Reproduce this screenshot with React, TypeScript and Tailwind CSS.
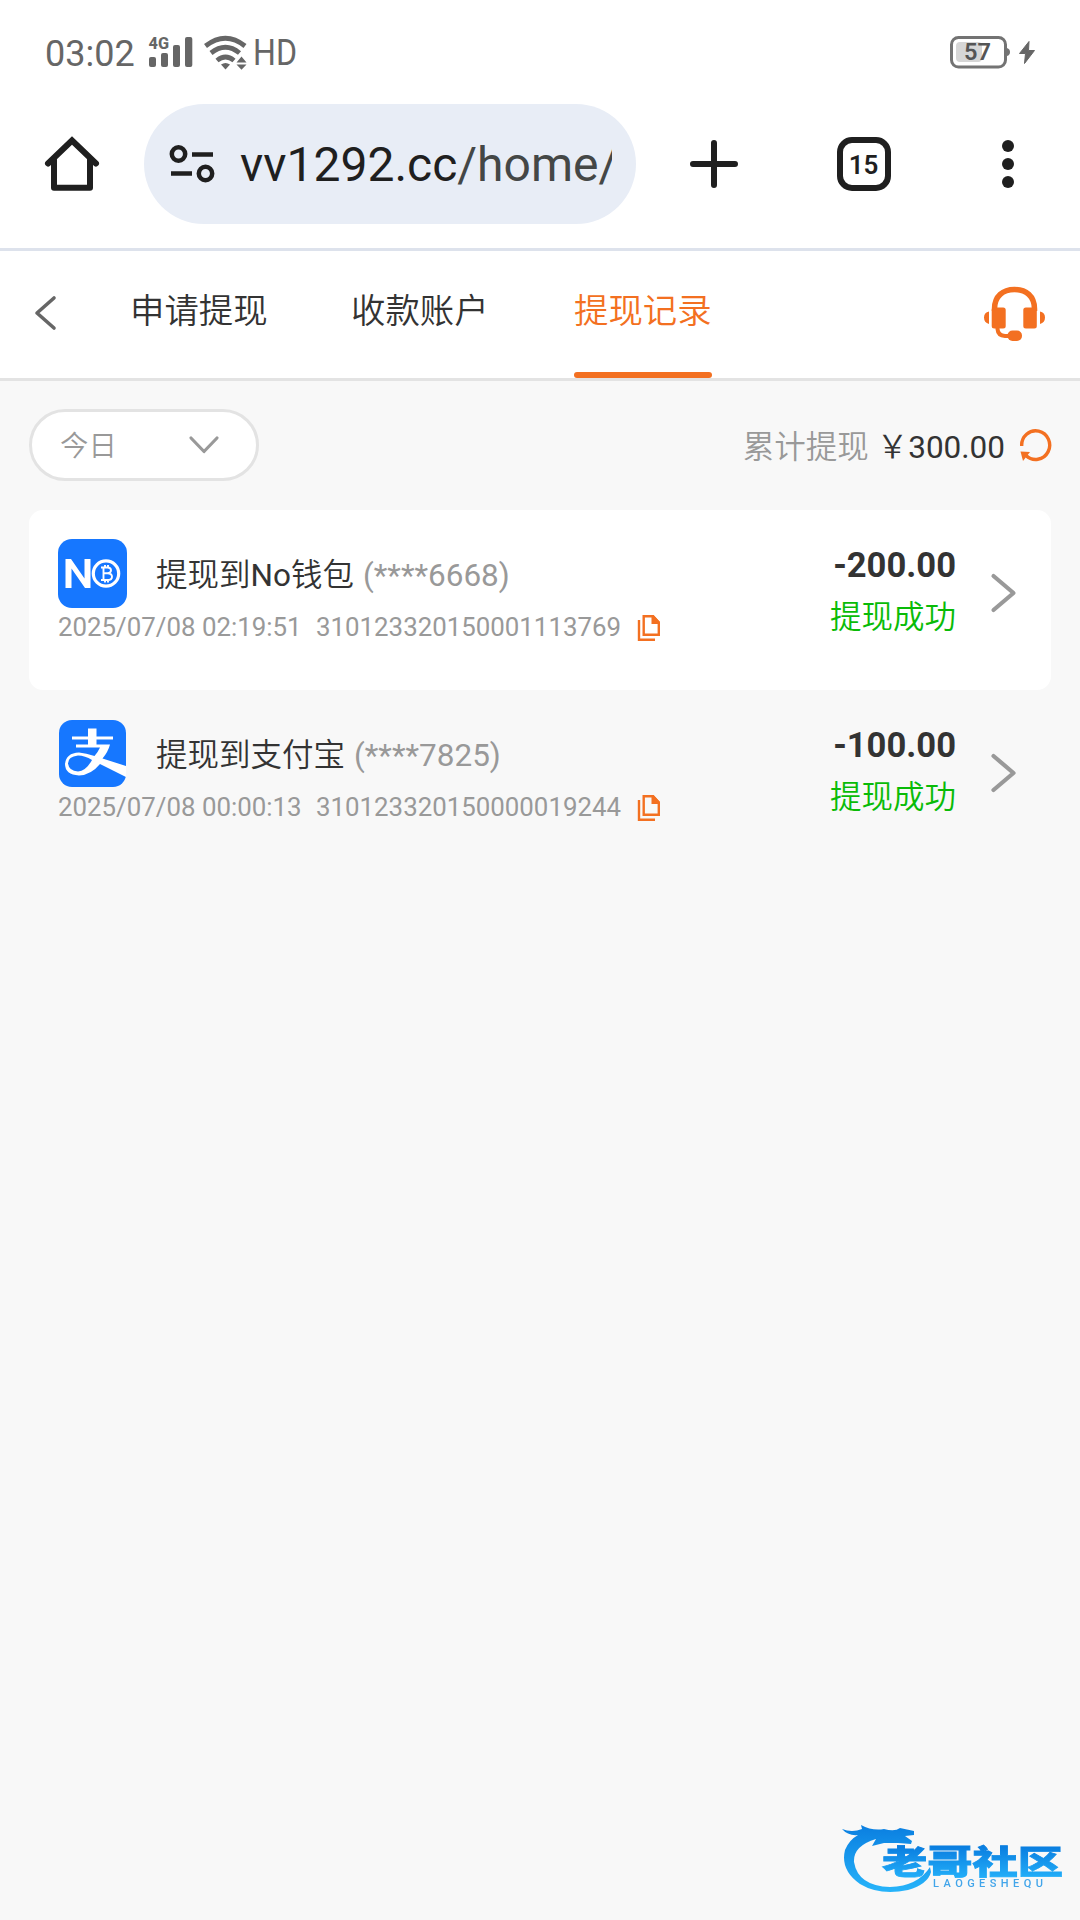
import React from "react";

const Chevron = ({ className, d, box, w }: { className: string; d: string; box: string; w: number }) => (
  <svg className={className} viewBox={box} fill="none" stroke="currentColor" strokeWidth={w} strokeLinecap="round" strokeLinejoin="round">
    <path d={d} />
  </svg>
);

function StatusBar() {
  return (
    <div className="flex h-[104px] shrink-0 items-start justify-between pt-[29px] pr-[44px] pl-[45px] text-[#666]">
      <div className="flex h-[46px] items-center">
        <span className="w-[103px] pt-[4px] text-[36px] leading-[46px] font-[450]">03:02</span>
        <svg className="h-[46px] w-[46px] overflow-visible" viewBox="148 29 46 46" fill="currentColor">
          <text x="148.500" y="49.300" fontSize="17" fontWeight="800" textLength="20.500" lengthAdjust="spacingAndGlyphs">4G</text>
          <rect x="149" y="57" width="7" height="10" rx="2" />
          <rect x="161" y="53" width="7" height="14" rx="2" />
          <rect x="173" y="45" width="7" height="22" rx="2" />
          <rect x="185" y="37" width="7.300" height="30" rx="2" />
        </svg>
        <svg className="ml-[9px] h-[46px] w-[46px]" viewBox="203 29 46 46" fill="none" stroke="currentColor" strokeWidth="4.800">
          <path d="M205.500 46Q225.500 30.500 245 46" />
          <path d="M211 53Q225.500 41.500 239.500 53" />
          <path d="M217 60.500Q225.500 53.500 234 60.500" />
          <path d="M221 64.500Q225.500 61.500 230 64.500L225.500 69.500Z" fill="currentColor" stroke="none" />
          <path d="M236.500 62.500L241.500 56.500L246.500 62.500ZM236.500 64.500H246.500L241.500 69.700Z" fill="currentColor" stroke="none" />
        </svg>
        <svg className="ml-[4px] h-[46px] w-[46px] overflow-visible" viewBox="253 29 46 46" fill="currentColor">
          <text x="253" y="65" fontSize="36" fontWeight="450" textLength="44" lengthAdjust="spacingAndGlyphs">HD</text>
        </svg>
      </div>
      <svg className="h-[46px] w-[88px]" viewBox="948 29 88 46" fill="currentColor">
        <rect x="951.500" y="37.500" width="54" height="29.500" rx="7" fill="none" stroke="#737373" strokeWidth="3" />
        <rect x="956" y="42" width="26" height="20" rx="4" fill="#d6d6d6" />
        <path d="M1007 48Q1010 49 1010 52Q1010 55 1007 56Z" fill="#737373" />
        <text x="964" y="60" fontSize="24" fontWeight="600" fill="#555" textLength="27" lengthAdjust="spacingAndGlyphs">57</text>
        <path d="M1029 41.500L1019.500 53.500H1025.500L1024.500 63.500L1034.500 50.500H1028.500Z" stroke="currentColor" strokeWidth="1" strokeLinejoin="round" />
      </svg>
    </div>
  );
}

function BrowserBar() {
  return (
    <div className="flex h-[147px] shrink-0 items-start border-b-[3px] border-[#dde2ec] text-[#1f1f1f]">
      <svg className="mt-[30px] ml-[42px] h-[60px] w-[60px]" viewBox="42 134 60 60" fill="none" stroke="currentColor" strokeWidth="6" strokeLinejoin="round" strokeLinecap="round">
        <path d="M48 163.500L72 140.500L96 163.500" strokeLinejoin="miter" />
        <path d="M54 160V187.700H90V160" />
      </svg>
      <div className="ml-[42px] flex h-[120px] w-[492px] items-center rounded-[60px] bg-[#e8edf6] pl-[24px]">
        <svg className="h-[60px] w-[52px]" viewBox="168 134 52 60" fill="none" stroke="currentColor" strokeWidth="4.500">
          <circle cx="178.500" cy="154" r="6.700" />
          <path d="M192 154.500H213M171 173.500H192" />
          <circle cx="205.500" cy="173.500" r="6.700" />
        </svg>
        <div className="ml-[20px] w-[372px] overflow-hidden pt-[2px] text-[48px] leading-[60px] whitespace-nowrap">
          vv1292.cc<span className="text-[#444746]">/home/</span>
        </div>
      </div>
      <svg className="mt-[33px] ml-[51px] h-[54px] w-[54px]" viewBox="0 0 54 54" stroke="currentColor" strokeWidth="6" strokeLinecap="round">
        <path d="M27 6V48M6 27H48" />
      </svg>
      <div className="mt-[33px] ml-[96px] flex h-[54px] w-[54px] items-center justify-center rounded-[15px] border-[6px] border-current pt-[2px] pr-[1px] text-[26px] leading-none font-semibold">15</div>
      <div className="mt-[36px] ml-[111px] flex flex-col gap-[6px]">
        <i className="size-3 rounded-full bg-current" />
        <i className="size-3 rounded-full bg-current" />
        <i className="size-3 rounded-full bg-current" />
      </div>
    </div>
  );
}

function Tabs() {
  return (
    <div className="flex h-[130px] shrink-0 items-start border-b-[3px] border-[#e3e3e3] text-[34.400px] text-[#333]">
      <Chevron className="mt-[42px] ml-[32px] h-[40px] w-[28px] text-[#666]" box="0 0 28 40" d="M22 5L5 20L22 35" w={3.6} />
      <div className="ml-[70px] flex h-[127px] gap-[84px] leading-[120px] font-[350]">
        <span className="w-[137px] whitespace-nowrap">申请提现</span>
        <span className="w-[139px] whitespace-nowrap">收款账户</span>
        <span className="flex w-[138px] flex-col justify-between whitespace-nowrap text-[#f37021]">
          <span className="h-[120px]">提现记录</span>
          <i className="h-[6px] rounded-full bg-[#f37021]" />
        </span>
      </div>
      <svg className="mt-[31px] ml-[270px] h-[64px] w-[66px]" viewBox="982 282 66 64" fill="#f37021">
        <path d="M994.500 311V309C994.500 296 1003 289.500 1014.500 289.500S1034.500 296 1034.500 309V311" fill="none" stroke="#f37021" strokeWidth="5.500" />
        <rect x="991.700" y="307.500" width="14" height="21" rx="2.500" />
        <rect x="1023.300" y="307.500" width="13.500" height="21" rx="2.500" />
        <path d="M989 311.500V324Q984 322.500 984 317.500Q984 312.500 989 311.500ZM1040 311.500V324Q1045 322.500 1045 317.500Q1045 312.500 1040 311.500Z" />
        <path d="M997.500 327V329Q998 335.500 1005 336H1010" fill="none" stroke="#f37021" strokeWidth="4" />
        <rect x="1007.500" y="330.500" width="14.500" height="10.500" rx="5" />
      </svg>
    </div>
  );
}

function Summary() {
  return (
    <div className="flex h-[72px] items-center justify-between">
      <div className="flex h-[72px] w-[230px] items-center justify-between rounded-full border-[3px] border-[#e3e3e3] bg-white pr-[35px] pl-[28px] text-[28.400px] text-[#999]">
        <span className="pt-[4px] leading-[42px] font-[350]">今日</span>
        <Chevron className="h-[22px] w-[34px]" box="0 0 34 22" d="M4 4L17 17.500L30 4" w={3.2} />
      </div>
      <div className="-mr-px flex items-center text-[31.500px] leading-[44px] whitespace-nowrap">
        <span className="pt-[5px] font-[350] text-[#999]">累计提现</span>
        <span className="ml-2 pt-[5px] text-[#333]"><span className="font-[350]">￥</span>300.00</span>
        <svg className="ml-[13px] h-[36px] w-[34px]" viewBox="1018 427 34 36" fill="none" stroke="#f37021" strokeWidth="3.400">
          <path d="M1021.700 446A14 14.300 0 1 1 1026 455.500" />
          <path d="M1020.500 451.500L1023 461L1030 452Z" fill="#f37021" stroke="none" />
        </svg>
      </div>
    </div>
  );
}

const NoLogo = () => (
  <svg className="size-[69px]" viewBox="0 0 69 69">
    <rect width="69" height="69" rx="14" fill="#1677ff" />
    <path d="M7.500 49V20H13L26.500 39.500V20H32.500V49H27L13.500 29.500V49Z" fill="#fff" />
    <circle cx="48" cy="34.500" r="12.700" fill="none" stroke="#fff" strokeWidth="3.200" />
    <path d="M43 28.500H49.500Q53 28.800 53 31.300Q53 34 49.500 34.200Q54 34.500 54 37.700Q54 41 49.500 41H43M45.500 28.500V41M45.500 34.200H49.500M47 26V28.500M50 26V28.500M47 41V43.500M50 41V43.500" fill="none" stroke="#fff" strokeWidth="1.900" />
  </svg>
);

const AlipayLogo = () => (
  <svg className="size-[69px]" viewBox="0 0 69 69">
    <rect x="1" y="1" width="67" height="67" rx="13" fill="#1677ff" />
    <path d="M30 9.500H38.500V17.500H55V20.500H38.500V25.500H52Q50 33 44.500 39.500L68 47V58L42 45Q33 56 21 56.500Q7 55.500 7 45Q8 34 21 33.500Q28 34 36.500 37Q40 33 42 28.500H18V25.500H30V20.500H14V17.500H30Z" fill="#fff" />
    <path d="M34 41Q27 36.500 20 36.500Q10 37.500 10 44.500Q11 52 20 52.500Q28 52 34 41Z" fill="#1677ff" />
  </svg>
);

type Rec = { logo: React.ReactNode; title: React.ReactNode; tail: string; time: string; id: string; amount: string; card: string };

const records: Rec[] = [
  { logo: <NoLogo />, title: <>提现到<span className="font-normal">No</span>钱包</>, tail: "(****6668)", time: "2025/07/08 02:19:51", id: "310123320150001113769", amount: "-200.00", card: "bg-white" },
  { logo: <AlipayLogo />, title: "提现到支付宝", tail: "(****7825)", time: "2025/07/08 00:00:13", id: "310123320150000019244", amount: "-100.00", card: "bg-transparent" },
];

function Row({ r }: { r: Rec }) {
  return (
    <div className={"flex h-[180px] rounded-[14px] pt-[29px] pl-[29px] whitespace-nowrap " + r.card}>
      <div className="w-[650px] shrink-0">
        <div className="flex h-[69px] items-center text-[31.500px]">
          {r.logo}
          <span className="ml-[29px] pt-[4px] font-[350] text-[#333]">{r.title}</span>
          <span className="ml-[9px] pt-[4px] text-[#999]">{r.tail}</span>
        </div>
        <div className="flex h-[38px] items-center text-[25.850px] text-[#999]">
          <span className="w-[258px]">{r.time}</span>
          <span className="w-[320px]">{r.id}</span>
          <svg className="mt-[2px] h-[30px] w-[26px]" viewBox="636 613 26 30" fill="none" stroke="#f37021" strokeWidth="2.400">
            <path d="M639 620V639.700H655" />
            <path d="M643.700 616.200H653L658.800 622.500V634.800H643.700Z" />
            <path d="M651.500 615V624H660V622L653.500 615Z" fill="#f37021" stroke="none" />
          </svg>
        </div>
      </div>
      <div className="flex w-[248px] flex-col items-end text-[#333]">
        <span className="mt-[3px] h-[46px] text-[34.600px] leading-[46px] font-bold">{r.amount}</span>
        <span className="mt-[7px] text-[31.500px] leading-[46px] font-[350] text-[#09bb07]">提现成功</span>
      </div>
      <Chevron className="mt-[32px] ml-[32px] h-[44px] w-[32px] text-[#999]" box="0 0 32 44" d="M5.500 5L25.500 22L5.500 39" w={4.2} />
    </div>
  );
}

function Watermark() {
  return (
    <svg className="absolute top-[1812px] left-[838px] h-[90px] w-[232px]" viewBox="838 1812 232 90">
      <defs>
        <linearGradient id="wm" gradientUnits="userSpaceOnUse" x1="0" y1="1825" x2="0" y2="1892">
          <stop offset="0" stopColor="#0a7ee0" />
          <stop offset="1" stopColor="#27b4fa" />
        </linearGradient>
        <linearGradient id="wt" gradientUnits="userSpaceOnUse" x1="0" y1="1847" x2="0" y2="1877">
          <stop offset="0" stopColor="#0a7ee0" />
          <stop offset="1" stopColor="#22adf8" />
        </linearGradient>
      </defs>
      <g className="blur-[0.7px]">
        <path d="M842 1829Q852 1833 862 1829L861 1825Q872 1831 884 1829Q895 1832 900 1828L914 1831L914 1835L905 1836L912 1841L911 1844L898 1843L884 1843L872 1846L876 1839Q853 1846 854 1862Q858 1886 890 1887Q918 1886 930 1867L931 1872Q928 1884 908 1890Q880 1896 860 1884Q840 1870 845 1850Q849 1840 858 1835Q848 1836 842 1829Z" fill="url(#wm)" />
        <text x="882" y="1874" fontSize="33" fontWeight="900" textLength="181" lengthAdjust="spacingAndGlyphs" fill="url(#wt)" stroke="url(#wt)" strokeWidth="0.800">老哥社区</text>
        <text x="933" y="1887" fontSize="11" fontWeight="500" fill="#42a5ea" textLength="110" lengthAdjust="spacing">LAOGESHEQU</text>
      </g>
    </svg>
  );
}

export default function App() {
  return (
    <div className="relative flex h-[1920px] w-[1080px] flex-col overflow-hidden bg-white font-['Roboto','Noto_Sans_CJK_SC',sans-serif]">
      <StatusBar />
      <BrowserBar />
      <Tabs />
      <main className="flex grow flex-col gap-[29px] bg-[#f8f8f8] px-[29px] pt-[28px]">
        <Summary />
        <div>
          {records.map((r) => (
            <Row key={r.id} r={r} />
          ))}
        </div>
      </main>
      <Watermark />
    </div>
  );
}
